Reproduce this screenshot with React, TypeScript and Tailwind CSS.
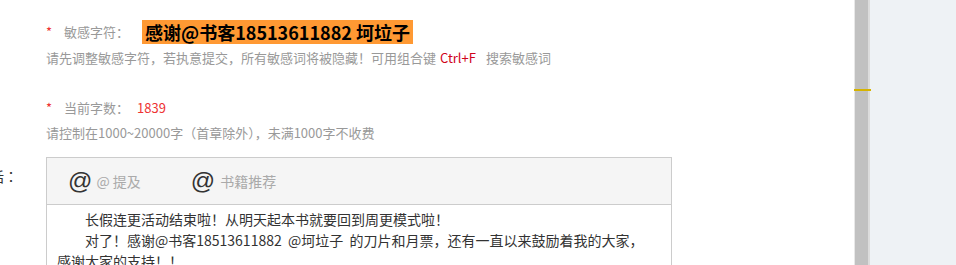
import React from 'react';

const font = { fontFamily: '"Noto Sans CJK SC", "Noto Sans", sans-serif' };

function Star() {
  return <span className="w-[18px] text-[13px] text-[#e33] leading-5">*</span>;
}

function EditorToolbar() {
  return (
    <div className="flex h-[47px] items-center border-b border-[#ccc] bg-[#f5f5f5] pl-[21px]">
      <div className="flex items-center">
        <span className="font-['Liberation_Sans',sans-serif] text-[24px] leading-none text-[#333]">@</span>
        <span className="ml-[4px] text-[14px] text-[#aaa]">@ 提及</span>
      </div>
      <div className="ml-[50px] flex items-center">
        <span className="font-['Liberation_Sans',sans-serif] text-[24px] leading-none text-[#333]">@</span>
        <span className="ml-[5px] text-[14px] text-[#aaa]">书籍推荐</span>
      </div>
    </div>
  );
}

export default function App() {
  return (
    <div className="flex h-[265px] w-[956px] overflow-hidden bg-white" style={font}>
      {/* form column */}
      <div className="flex-1 overflow-hidden">
        <div className="pl-[46px] pt-[20px]">
          <div className="flex h-6 items-center">
            <Star />
            <span className="text-[13px] text-[#999]">敏感字符：</span>
            <span className="ml-[13px] bg-[#ff9933] px-[3px] text-[18px] leading-6 font-bold text-black">
              感谢@书客18513611882 坷垃子
            </span>
          </div>
          <p className="mt-1 text-[13px] leading-5 text-[#999]">
            请先调整敏感字符，若执意提交，所有敏感词将被隐藏！可用组合键
            <span className="ml-[4px] text-[#d0021b]">Ctrl+F</span>
            <span className="ml-[10px]">搜索敏感词</span>
          </p>

          <div className="mt-[30px] flex h-5 items-center">
            <Star />
            <span className="text-[13px] text-[#999]">当前字数：</span>
            <span className="ml-[8px] text-[13px] text-[#e33]">1839</span>
          </div>
          <p className="mt-[5px] text-[13px] leading-5 text-[#999]">
            请控制在1000~20000字（首章除外），未满1000字不收费
          </p>
        </div>

        <div className="mt-[14px] flex">
          <div className="flex w-[18px] shrink-0 justify-end overflow-hidden pt-[9px]">
            <span className="whitespace-nowrap text-[14px] leading-5 text-[#333]">
              作者的话<span className="font-['Noto_Sans_CJK_TC',sans-serif]">：</span>
            </span>
          </div>
          <div className="ml-[28px] w-[626px] shrink-0 border border-[#ccc] bg-white">
            <EditorToolbar />
            <div className="px-[10px] pt-[4px] pb-4 text-[14px] leading-[21px] text-[#333]">
              <p className="indent-[28px]">长假连更活动结束啦！从明天起本书就要回到周更模式啦！</p>
              <p className="indent-[28px]">
                对了！感谢@书客18513611882{'\u00a0\u00a0'}@坷垃子{'\u00a0\u00a0'}的刀片和月票，还有一直以来鼓励着我的大家，
                <br />
                感谢大家的支持！！
              </p>
            </div>
          </div>
        </div>
      </div>

      {/* scrollbar */}
      <div className="relative flex shrink-0">
        <div className="w-px bg-[#e8e8e8]" />
        <div className="w-[13px] bg-[#c1c1c1]" />
        <div className="w-[2px] bg-[#dcdcdc]" />
        <div className="absolute left-0 top-[89px] h-[2px] w-[17px] bg-[#d6b300]" />
      </div>

      {/* side panel */}
      <div className="w-[86px] shrink-0 bg-[#eef2f5]" />
    </div>
  );
}
